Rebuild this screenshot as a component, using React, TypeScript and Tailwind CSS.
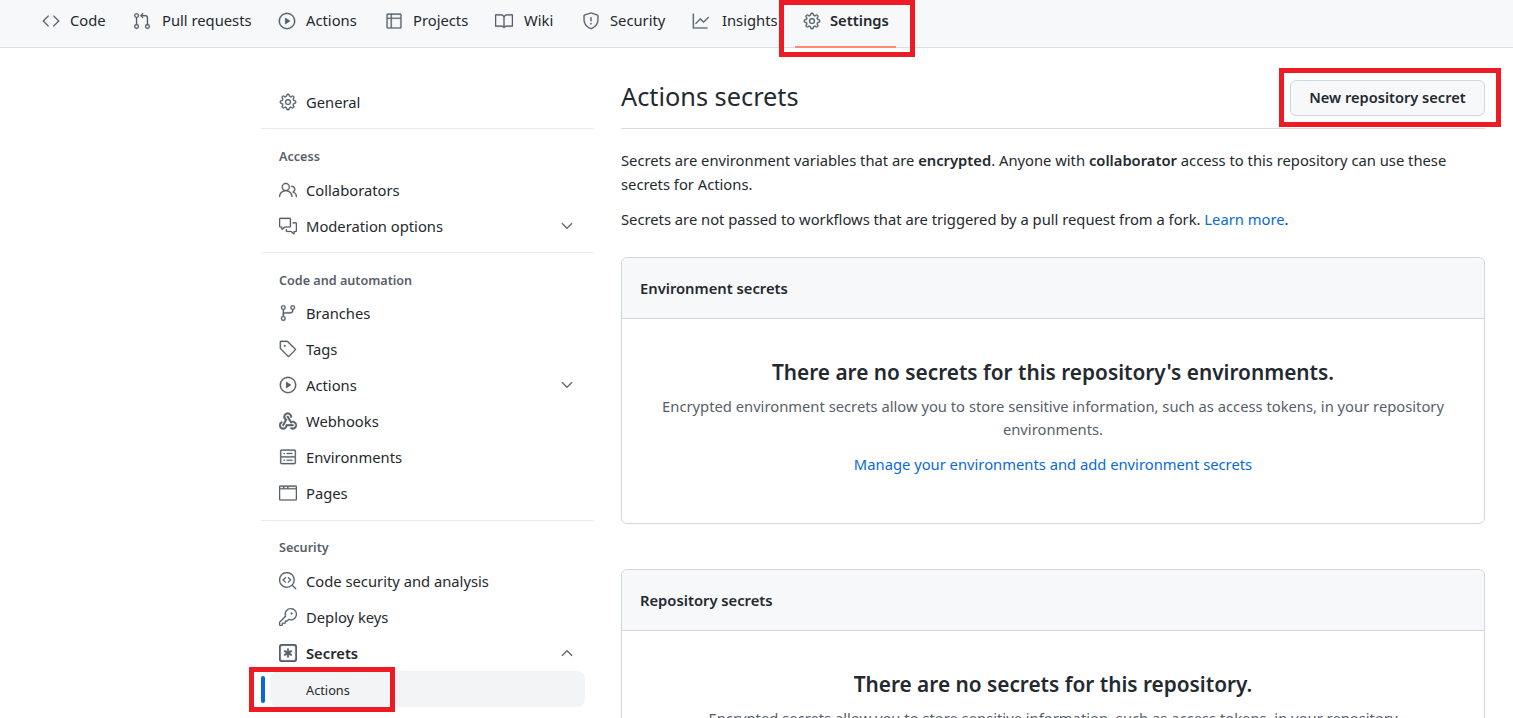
import type { ComponentType, ReactNode } from "react";
import {
  GoBook,
  GoBrowser,
  GoChevronDown,
  GoChevronUp,
  GoCode,
  GoCodescan,
  GoCommentDiscussion,
  GoGear,
  GoGitBranch,
  GoGitPullRequest,
  GoGraph,
  GoKey,
  GoPeople,
  GoPlay,
  GoServer,
  GoShield,
  GoTable,
  GoTag,
} from "react-icons/go";

type Icon = ComponentType<{ size?: number; className?: string }>;

const iconCls = "text-[#57606a] shrink-0 stroke-current stroke-[0.35]";

const GoKeyAsterisk: Icon = ({ size, className }) => (
  <svg width={size} height={size} viewBox="0 0 16 16" fill="currentColor" className={className}>
    <path d="M0 2.75A2.75 2.75 0 0 1 2.75 0h10.5A2.75 2.75 0 0 1 16 2.75v10.5A2.75 2.75 0 0 1 13.25 16H2.75A2.75 2.75 0 0 1 0 13.25ZM2.75 1.5c-.69 0-1.25.56-1.25 1.25v10.5c0 .69.56 1.25 1.25 1.25h10.5c.69 0 1.25-.56 1.25-1.25V2.75c0-.69-.56-1.25-1.25-1.25Z" />
    <path d="M8 4a.75.75 0 0 1 .75.75V6.7l1.69-.975a.75.75 0 0 1 .75 1.3L9.5 8l1.69.976a.75.75 0 0 1-.75 1.298L8.75 9.3v1.951a.75.75 0 0 1-1.5 0V9.299l-1.69.976a.75.75 0 0 1-.75-1.3L6.5 8l-1.69-.975a.75.75 0 0 1 .75-1.3l1.69.976V4.75A.75.75 0 0 1 8 4Z" />
  </svg>
);

const GoWebhook: Icon = ({ size, className }) => (
  <svg width={size} height={size} viewBox="0 0 16 16" fill="currentColor" className={className}>
    <path d="M5.5 4.25a2.25 2.25 0 0 1 4.5 0 .75.75 0 0 0 1.5 0 3.75 3.75 0 1 0-6.14 2.889l-2.272 4.258a.75.75 0 0 0 1.324.706L7 7.25a.75.75 0 0 0-.309-1.015A2.25 2.25 0 0 1 5.5 4.25Z" />
    <path d="M7.364 3.607a.75.75 0 0 1 1.03.257l2.608 4.349a3.75 3.75 0 1 1-.628 6.785.75.75 0 0 1 .752-1.299 2.25 2.25 0 1 0-.033-3.88.75.75 0 0 1-1.03-.256L7.107 4.636a.75.75 0 0 1 .257-1.03Z" />
    <path d="M2.9 8.776A.75.75 0 0 1 2.625 9.8 2.25 2.25 0 1 0 6 11.75a.75.75 0 0 1 .75-.751h5.5a.75.75 0 0 1 0 1.5H7.425a3.751 3.751 0 1 1-5.55-3.998.75.75 0 0 1 1.024.274Z" />
  </svg>
);

const tabs: { label: string; icon: Icon; cls: string }[] = [
  { label: "Code", icon: GoCode, cls: "ml-[42px] w-[91px] gap-[10px]" },
  { label: "Pull requests", icon: GoGitPullRequest, cls: "w-[145px] gap-[11px]" },
  { label: "Actions", icon: GoPlay, cls: "w-[107px] gap-[10px]" },
  { label: "Projects", icon: GoTable, cls: "w-[110px] gap-[10px]" },
  { label: "Wiki", icon: GoBook, cls: "w-[87px] gap-[11px]" },
  { label: "Security", icon: GoShield, cls: "w-[110px] gap-[10px]" },
  { label: "Insights", icon: GoGraph, cls: "w-[103px] gap-[12px]" },
];

const SideItem = ({
  icon: Ic,
  label,
  chevron,
  bold,
}: {
  icon: Icon;
  label: string;
  chevron?: "up" | "down";
  bold?: boolean;
}) => (
  <div className="flex items-center h-9 pl-[18px] pr-[18px]">
    <Ic size={18} className={iconCls} />
    <span className={`ml-[9px] text-[#24292f] ${bold ? "font-semibold" : ""}`}>{label}</span>
    {chevron === "down" && <GoChevronDown size={18} className={`ml-auto ${iconCls}`} />}
    {chevron === "up" && <GoChevronUp size={18} className={`ml-auto ${iconCls}`} />}
  </div>
);

const SideHeading = ({ children }: { children: ReactNode }) => (
  <div className="pl-[18px] text-[12.6px] font-semibold text-[#57606a] h-[18px] leading-[18px]">{children}</div>
);

const Divider = () => <div className="h-px bg-[#e8ebef]" />;

const SecretBox = ({
  title,
  heading,
  children,
  link,
  className,
}: {
  title: string;
  heading: string;
  children: ReactNode;
  link?: string;
  className: string;
}) => (
  <div className={`border border-[#d0d7de] rounded-md ${className}`}>
    <div className="h-[61px] pt-[1px] bg-[#f6f8fa] rounded-t-md border-b border-[#d0d7de] flex items-center px-[18px] font-semibold text-[#24292f]">
      {title}
    </div>
    <div className="px-[18px] pt-[39px] text-center">
      <h3 className="text-[20.8px] leading-[28px] font-semibold text-[#24292f]">{heading}</h3>
      <p className="mt-[9px] text-[#57606a] leading-[23px]">{children}</p>
      {link && <a className="block mt-[12px] text-[#0969da] leading-[23px]">{link}</a>}
    </div>
  </div>
);

export default function App() {
  return (
    <div className="relative h-[718px] overflow-hidden bg-white font-['Noto_Sans',sans-serif] text-[14.75px] text-[#24292f]">
      <nav className="h-[48px] bg-[#f6f8fa] border-b border-[#d8dee4] flex items-center">
        {tabs.map(({ label, icon: Ic, cls }) => (
          <div key={label} className={`flex items-center h-full pb-[6px] shrink-0 ${cls}`}>
            <Ic size={18} className={iconCls} />
            <span className="text-[#24292f]">{label}</span>
          </div>
        ))}
        <div className="relative flex items-center h-full w-[101px] pl-[8px] pb-[6px] shrink-0">
          <GoGear size={18} className={iconCls} />
          <span className="ml-[9px] font-semibold">Settings</span>
          <div className="absolute left-0 right-0 bottom-[-1px] h-[2px] bg-[#fd8c73]" />
        </div>
      </nav>

      <div className="flex pl-[261px] pr-[28px] pt-[36px]">
        <aside className="w-[333px] shrink-0">
          <SideItem icon={GoGear} label="General" />
          <div className="mt-[8px]"><Divider /></div>
          <div className="mt-[19px]"><SideHeading>Access</SideHeading></div>
          <div className="mt-[6px]">
            <SideItem icon={GoPeople} label="Collaborators" />
            <SideItem icon={GoCommentDiscussion} label="Moderation options" chevron="down" />
          </div>
          <div className="mt-[8px]"><Divider /></div>
          <div className="mt-[19px]"><SideHeading>Code and automation</SideHeading></div>
          <div className="mt-[5px]">
            <SideItem icon={GoGitBranch} label="Branches" />
            <SideItem icon={GoTag} label="Tags" />
            <SideItem icon={GoPlay} label="Actions" chevron="down" />
            <SideItem icon={GoWebhook} label="Webhooks" />
            <SideItem icon={GoServer} label="Environments" />
            <SideItem icon={GoBrowser} label="Pages" />
          </div>
          <div className="mt-[9px]"><Divider /></div>
          <div className="mt-[18px]"><SideHeading>Security</SideHeading></div>
          <div className="mt-[6px]">
            <SideItem icon={GoCodescan} label="Code security and analysis" />
            <SideItem icon={GoKey} label="Deploy keys" />
            <SideItem icon={GoKeyAsterisk} label="Secrets" chevron="up" bold />
          </div>
          <div className="relative ml-[9px] mr-[9px] h-[36px] pt-[3px] bg-[#f3f4f6] rounded-lg flex items-center pl-[36px] text-[12.75px]">
            Actions
            <div className="absolute left-[-9px] top-[5px] h-[27px] w-[4px] rounded bg-[#0969da]" />
          </div>
        </aside>

        <main className="ml-[27px] flex-1 min-w-0">
          <div className="flex items-start justify-between h-[49px] border-b border-[#d8dee4] -mt-[4px]">
            <h2 className="text-[25.3px] leading-[33px]">Actions secrets</h2>
            <button className="h-[36px] w-[195px] rounded-md border border-[#d0d7de] bg-[#f6f8fa] font-semibold text-[14.6px] text-[#24292f]">
              New repository secret
            </button>
          </div>
          <p className="mt-[19px] leading-[24px]">
            Secrets are environment variables that are <b className="font-semibold">encrypted</b>. Anyone with{" "}
            <b className="font-semibold">collaborator</b> access to this repository can use these secrets for Actions.
          </p>
          <p className="mt-[11px] leading-[24px]">
            Secrets are not passed to workflows that are triggered by a pull request from a fork.{" "}
            <a className="text-[#0969da]">Learn more</a>.
          </p>
          <SecretBox
            className="mt-[26px] h-[267px]"
            title="Environment secrets"
            heading="There are no secrets for this repository's environments."
            link="Manage your environments and add environment secrets"
          >
            Encrypted environment secrets allow you to store sensitive information, such as access tokens, in your
            repository environments.
          </SecretBox>
          <SecretBox
            className="mt-[45px] h-[300px]"
            title="Repository secrets"
            heading="There are no secrets for this repository."
          >
            Encrypted secrets allow you to store sensitive information, such as access tokens, in your repository
          </SecretBox>
        </main>
      </div>

      {/* red annotation boxes drawn over the screenshot */}
      <div className="absolute left-[779px] top-0 w-[136px] h-[57px] border-[5px] border-[#ed1c24]" />
      <div className="absolute left-[1279px] top-[68px] w-[222px] h-[59px] border-[5px] border-[#ed1c24]" />
      <div className="absolute left-[249px] top-[667px] w-[146px] h-[45px] border-[5px] border-[#ed1c24]" />
    </div>
  );
}
